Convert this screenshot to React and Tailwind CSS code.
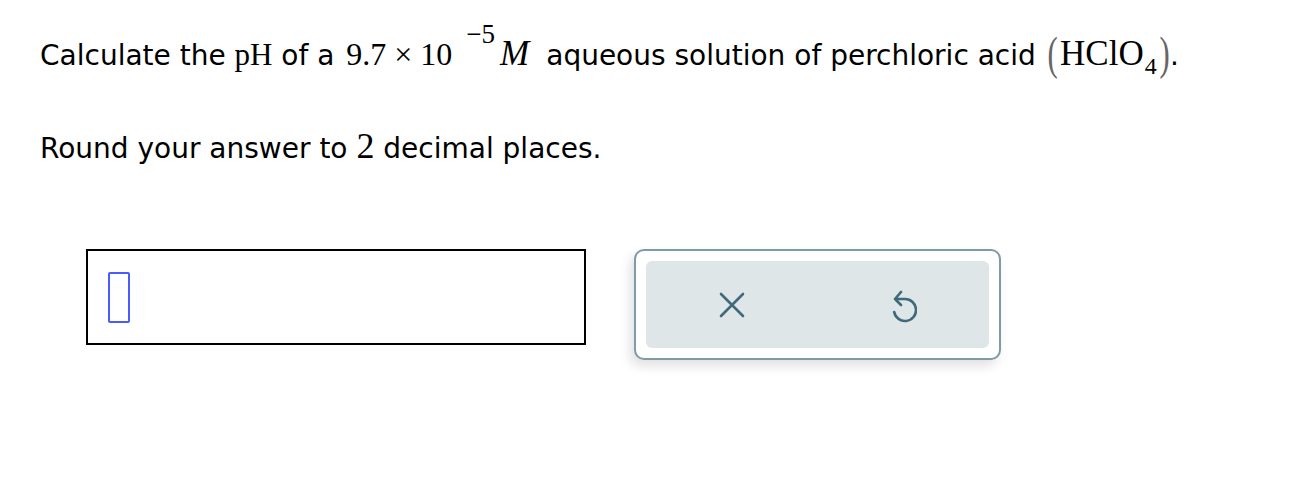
import React from "react";

const serif = "font-['Liberation_Serif','Times_New_Roman',serif]";

export default function App() {
  return (
    <div className="w-[1316px] h-[486px] bg-white text-black font-['DejaVu_Sans','Verdana',sans-serif] pl-[40px] pt-[34px]">
      <p className="text-[28px] leading-[40px] whitespace-nowrap">
        Calculate the <span className={`${serif} text-[31px]`}>pH</span> of a{" "}
        <span className={`${serif} text-[32px] ml-[3px]`}>
          9.7<span className="mx-[8px]">×</span>10
          <span className="relative top-[-22px] text-[27px] ml-[14px]">−5</span>
          <i className="ml-[5px] text-[35px]">M</i>
        </span>
        <span className="ml-[17px]">aqueous solution of perchloric acid</span>{" "}
        <span className={`${serif} text-[34px]`}>
          <span className="inline-block scale-y-[1.35] scale-x-[0.9] text-[#666] font-light ml-[2px] mr-[2px]">(</span>
          <span className="text-[35px]">HClO</span>
          <span className="relative top-[9px] text-[24px] ml-[1px]">4</span>
          <span className="inline-block scale-y-[1.35] scale-x-[0.9] text-[#666] font-light ml-[2px]">)</span>
        </span>
        .
      </p>
      <p className="text-[28px] leading-[40px] mt-[49px] whitespace-nowrap">
        Round your answer to <span className={`${serif} text-[36px]`}>2</span> decimal places.
      </p>
      <div className="flex items-start mt-[80px] ml-[46px] gap-[48px]">
        <div className="w-[500px] h-[96px] border-2 border-black flex items-center pl-[20px]">
          <div className="w-[22px] h-[51px] border-2 border-[#4a5cff] rounded-[2px]" />
        </div>
        <div className="w-[367px] h-[111px] border-2 border-[#7f9ba3] rounded-[10px] bg-white p-[10px] shadow-[-4px_6px_12px_rgba(0,0,0,0.12)]">
          <div className="w-full h-full bg-[#dfe6e8] rounded-[6px] flex items-center">
            <div className="flex-1 flex justify-center">
              <svg width="26" height="26" viewBox="0 0 26 26" fill="none" stroke="#3f6a79" strokeWidth="2.6" strokeLinecap="round">
                <path d="M2 2 L24 24 M24 2 L2 24" />
              </svg>
            </div>
            <div className="flex-1 flex justify-center">
              <svg width="28" height="36" viewBox="0 0 28 36" fill="none" stroke="#3f6a79" strokeWidth="2.6" strokeLinecap="round" strokeLinejoin="round">
                <path d="M12 5 L6 12 L12 18 M6 12 H16 A11 11 0 1 1 5.2 25" />
              </svg>
            </div>
          </div>
        </div>
      </div>
    </div>
  );
}
